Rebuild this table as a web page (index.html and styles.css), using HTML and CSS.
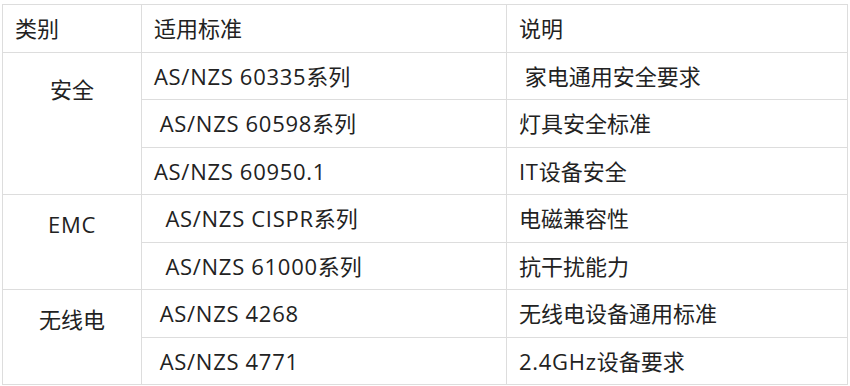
FILE: index.html
```html
<!DOCTYPE html>
<html lang="zh-CN">
<head>
<meta charset="utf-8">
<link rel="stylesheet" href="styles.css">
</head>
<body>
<table class="std">
  <colgroup>
    <col class="c1"><col class="c2"><col class="c3">
  </colgroup>
  <tr>
    <td class="head">类别</td>
    <td class="head">适用标准</td>
    <td class="head">说明</td>
  </tr>
  <tr>
    <td class="group g-safe" rowspan="3">安全</td>
    <td><span class="lat">AS/NZS 60335</span>系列</td>
    <td>&nbsp;家电通用安全要求</td>
  </tr>
  <tr>
    <td>&nbsp;<span class="lat">AS/NZS 60598</span>系列</td>
    <td>灯具安全标准</td>
  </tr>
  <tr>
    <td><span class="lat">AS/NZS 60950.1</span></td>
    <td><span class="lat">IT</span>设备安全</td>
  </tr>
  <tr>
    <td class="group" rowspan="2"><span class="lat">EMC</span></td>
    <td>&nbsp;&nbsp;<span class="lat">AS/NZS CISPR</span>系列</td>
    <td>电磁兼容性</td>
  </tr>
  <tr>
    <td>&nbsp;&nbsp;<span class="lat">AS/NZS 61000</span>系列</td>
    <td>抗干扰能力</td>
  </tr>
  <tr>
    <td class="group" rowspan="2">无线电</td>
    <td>&nbsp;<span class="lat">AS/NZS 4268</span></td>
    <td>无线电设备通用标准</td>
  </tr>
  <tr>
    <td>&nbsp;<span class="lat">AS/NZS 4771</span></td>
    <td><span class="lat">2.4GHz</span>设备要求</td>
  </tr>
</table>
</body>
</html>
```
FILE: styles.css
```css
html, body {
  margin: 0;
  padding: 0;
  background: #ffffff;
}
body {
  font-family: "Open Sans", "Noto Sans CJK SC", sans-serif;
  font-size: 22px;
  color: #222222;
}
.std {
  border-collapse: collapse;
  margin: 4px 0 0 2px;
  width: 845px;
  table-layout: fixed;
}
.c1 { width: 139px; }
.c2 { width: 365px; }
.c3 { width: 341px; }
.std tr { height: 47.5px; }
.std td {
  border: 1px solid #dddddd;
  padding: 0 12px;
  vertical-align: middle;
  white-space: nowrap;
  line-height: 30px;
}
.lat {
  letter-spacing: 0.7px;
}
.std td.group {
  text-align: center;
  vertical-align: top;
  padding-top: 14px;
}
.std td.group.g-safe {
  padding-top: 21px;
}
```
